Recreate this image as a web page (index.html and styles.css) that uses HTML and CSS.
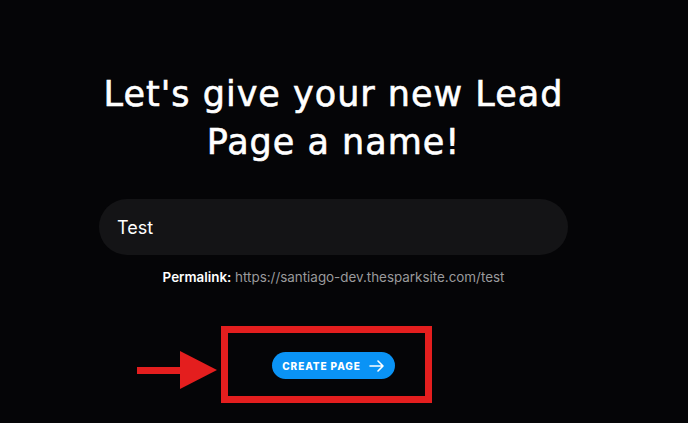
FILE: index.html
```html
<!DOCTYPE html>
<html lang="en">
<head>
    <meta charset="UTF-8">
    <title>Name your Lead Page</title>
    <link rel="stylesheet" href="styles.css">
</head>
<body>
    <div class="page">
        <h1 class="title">Let's give your new Lead Page a name!</h1>
        <div class="name-input">Test</div>
        <p class="permalink"><span class="permalink-label">Permalink:</span> https://santiago-dev.thesparksite.com/test</p>
        <div class="actions">
            <button class="create-btn">CREATE PAGE
                <svg width="16" height="12" viewBox="0 0 16 12" fill="none" stroke="white" stroke-width="1.6" stroke-linecap="round" stroke-linejoin="round">
                    <path d="M1 6h13M9 1l5 5-5 5"/>
                </svg>
            </button>
        </div>
    </div>
    <div class="highlight-box"></div>
    <div class="pointer">
        <div class="pointer-shaft"></div>
        <div class="pointer-head"></div>
    </div>
</body>
</html>
```

FILE: styles.css
```css
body {
    margin: 0;
    background-color: #050507;
    font-family: 'Inter', 'DejaVu Sans', sans-serif;
    color: white;
    height: 423px;
    overflow: hidden;
}
.page {
    width: 469px;
    margin-left: 99px;
    padding-top: 70px;
    display: flex;
    flex-direction: column;
    align-items: center;
}
.title {
    font-family: 'DejaVu Sans', sans-serif;
    font-weight: 400;
    font-size: 35px;
    line-height: 48px;
    letter-spacing: 1px;
    -webkit-text-stroke: 0.6px white;
    text-align: center;
    margin: 0 0 33px;
    width: 520px;
}
.name-input {
    width: 100%;
    box-sizing: border-box;
    height: 56px;
    border-radius: 28px;
    background-color: #141416;
    padding: 0 18px;
    display: flex;
    align-items: center;
    font-size: 18px;
    font-weight: 400;
}
.permalink {
    margin: 14px 0 0;
    font-size: 13.4px;
    color: #9a9a9c;
}
.permalink-label {
    color: white;
    font-weight: 600;
}
.actions {
    margin-top: 67px;
}
.create-btn {
    background-color: #0a93f5;
    color: white;
    border: none;
    border-radius: 14px;
    height: 27px;
    width: 123px;
    padding: 0;
    font-family: 'Inter', sans-serif;
    font-weight: 800;
    font-size: 10px;
    letter-spacing: 0.9px;
    display: flex;
    align-items: center;
    justify-content: center;
    gap: 8px;
}
.highlight-box {
    position: absolute;
    left: 221px;
    top: 326px;
    width: 197px;
    height: 63px;
    border: 7px solid #e41e1e;
}
.pointer {
    position: absolute;
    left: 137px;
    top: 351px;
    display: flex;
    align-items: center;
}
.pointer-shaft {
    width: 43px;
    height: 7px;
    background-color: #e41e1e;
}
.pointer-head {
    width: 0;
    height: 0;
    border-top: 19px solid transparent;
    border-bottom: 19px solid transparent;
    border-left: 37px solid #e41e1e;
}
```
